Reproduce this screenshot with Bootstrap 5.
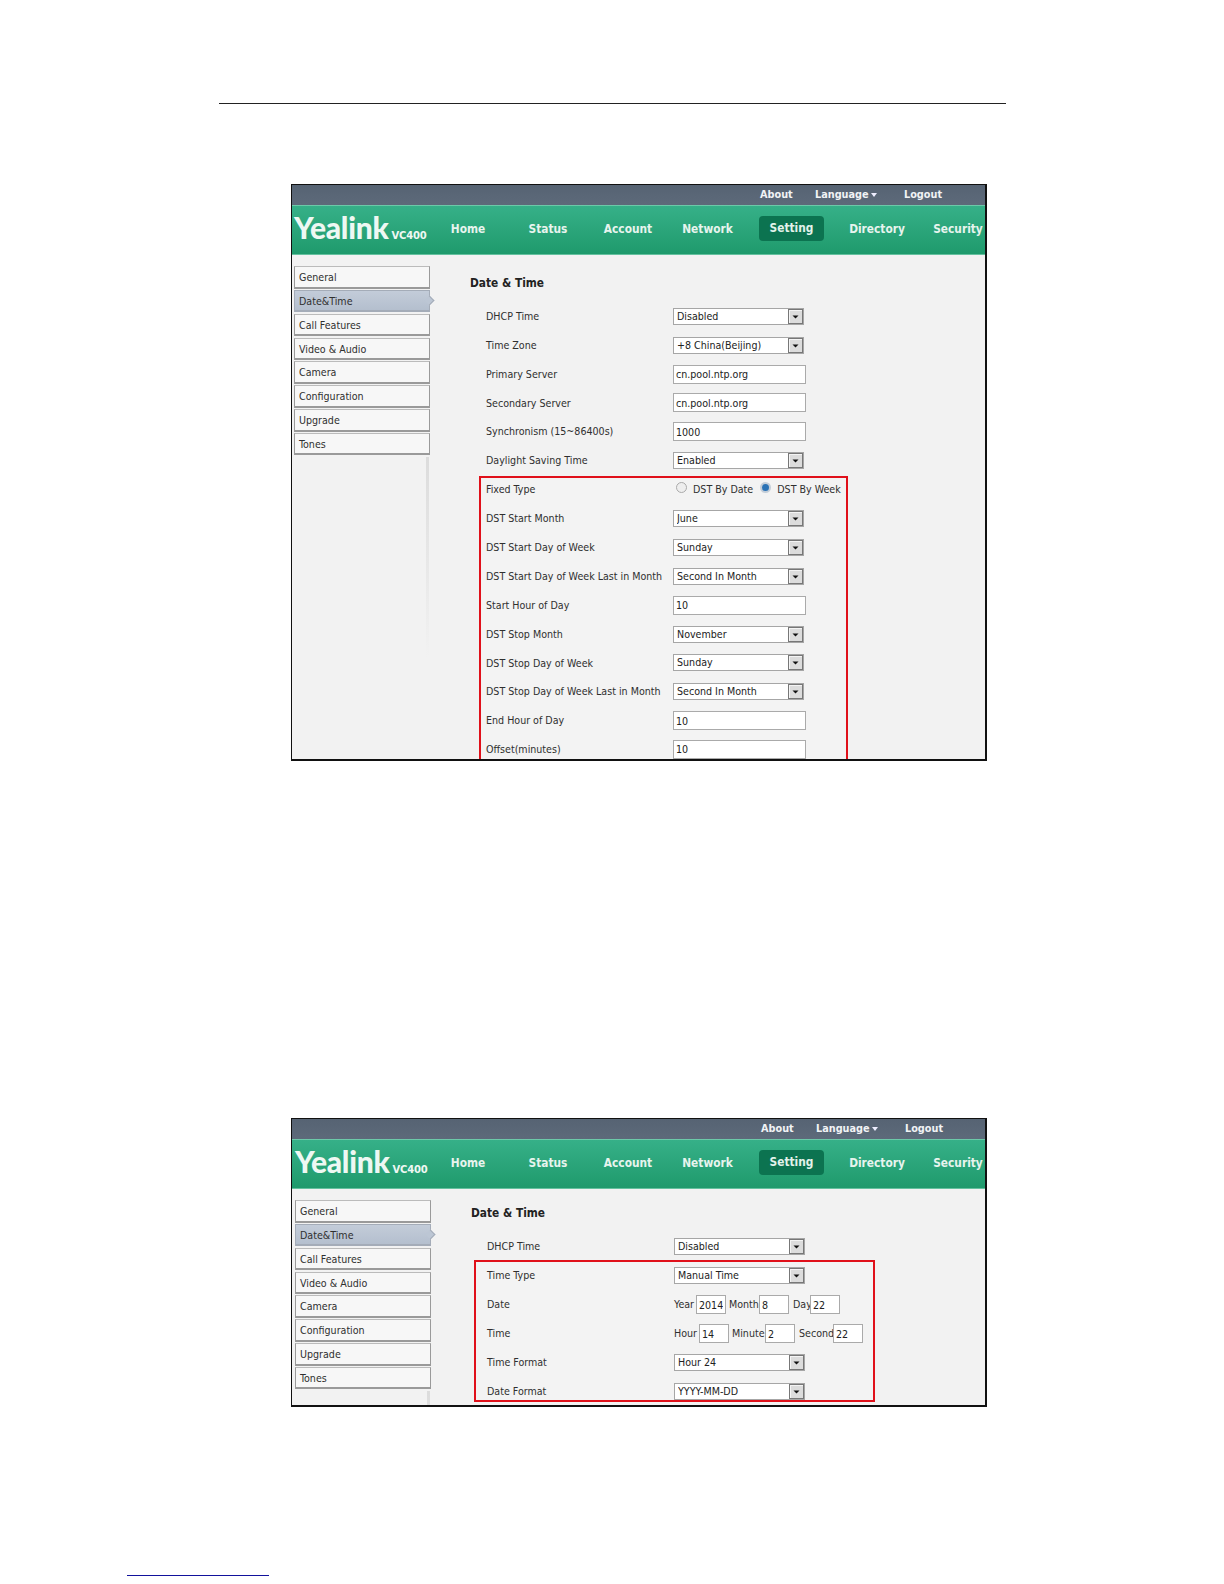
<!DOCTYPE html>
<html lang="en">
<head>
<meta charset="utf-8">
<title>Date &amp; Time</title>
<link rel="stylesheet" href="https://cdn.jsdelivr.net/npm/bootstrap@5.3.0/dist/css/bootstrap.min.css">
<style>
body{background:#fff;margin:0;font-family:"DejaVu Sans Condensed","DejaVu Sans",sans-serif;font-size:10.6px;color:#2f2f2f;line-height:1.2}
.sheet{width:1224px;height:1584px;overflow:hidden;padding-top:103px}
.toprule{height:1px;background:#222;margin:0 218px 0 219px}
.shot{width:696px;margin-left:291px;border:solid #111;border-width:1px 2px 2px 1px;background:#f2f2f2;overflow:hidden}
.shot-a{height:577px;margin-top:80px}
.shot-b{height:289px;margin-top:357px}
.tbar{height:20px;background:linear-gradient(#566373,#5d6a7a);color:#f1f3f5;font-weight:700;font-size:10.8px}
.tbar span{white-space:nowrap}
.t1{margin-left:468px;width:55px}
.t2{width:89px}
.shot-b .t1{margin-left:469px}
.caret{display:inline-block;border:solid transparent;border-width:4px 3px 0;border-top-color:#eef;margin-left:2px;vertical-align:1px}
.hbar{height:50px;background:linear-gradient(#36b088,#1f9a6c);border-top:1px solid #6cc9a9;border-bottom:1px solid #64c19f;color:#e7f4ee;font-weight:700;font-size:11.8px}
.logo{width:138px;padding-left:2px;margin-bottom:5px;color:#eef8f3;white-space:nowrap}
.logo b{font-family:Lato,sans-serif;font-weight:900;font-size:30px;letter-spacing:-.3px;line-height:1}
.logo i{font-style:normal;font-family:"DejaVu Sans",sans-serif;font-weight:700;font-size:10px;margin-left:3px;letter-spacing:-.2px}
.nitem{width:80px;height:25px;line-height:26px;margin-bottom:3px;text-align:center;white-space:nowrap;flex:none}
.nitem:nth-child(5){width:79px}
.nitem:nth-child(6){width:65px;margin-left:12px;margin-right:11px;line-height:25px;background:#0c7350;border-radius:4px;color:#e2f2ea}
.nitem:nth-child(7){width:84px}
.nitem:nth-child(8){width:54px;margin-left:12px}
.shot-b .logo{padding-left:3px;width:139px}
.sb{width:172px;flex:none;padding:11px 0 0 2px}
.shot-b .sb{padding-left:3px}
.sitem{width:136px;height:22.5px;line-height:21px;padding-left:4px;margin-bottom:1.35px;border:1px solid #9a9a9a;border-bottom-width:2px;border-top-color:#bbb;background:#f7f7f7;position:relative}
.sitem.on{background:linear-gradient(#c3ccd9,#b4bfce);border-color:#a4acb8}
.sitem.on::after{content:"";position:absolute;right:-4px;top:6px;width:7px;height:7px;background:#bcc6d4;border:solid #a4acb8;border-width:1px 1px 0 0;transform:rotate(45deg)}
.stail{width:3px;margin-left:132px;height:200px;background:linear-gradient(#dcdcdc,#f2f2f2)}
.main{flex:1;min-width:0}
.shot-a .ttl{margin:20px 0 0 6px}
.shot-b .ttl{margin:16px 0 0 7px}
.ttl{font-weight:700;font-size:11.8px;color:#222;height:16px;line-height:16px}
.shot-a .rows{margin-top:11px;padding-left:22px}
.shot-b .rows{margin-top:11px;padding-left:23px}
.fr{height:28.83px;white-space:nowrap}
.lb{width:187px;flex:none}
.redbox{border:2px solid #e0101a;background:#f3f3f3}
.rb-a{margin-left:-7px;width:369px;height:285px;margin-top:1px;padding-left:5px}
.rb-a .fr:first-child{margin-top:-2.4px;padding-bottom:2px}
.rb-b{margin-left:-13px;width:401px;height:142px;margin-top:-1px;padding-left:11px}
.rb-b .fr:first-child{margin-top:-.4px;padding-bottom:1px}
select.form-select.wsel{width:131px;height:17px;min-height:0;padding:0 20px 0 3px;font-size:10.6px;line-height:15px;color:#222;border:1px solid #a6a6a6;border-radius:0;box-shadow:none;background-color:#fff;background-position:right 0 center;background-size:15px 15px;background-repeat:no-repeat;background-image:url("data:image/svg+xml,%3Csvg xmlns='http://www.w3.org/2000/svg' width='15' height='15'%3E%3Crect width='15' height='15' fill='%23777'/%3E%3Crect x='1' y='1' width='13' height='13' fill='%23f4f4f4'/%3E%3Crect x='2' y='2' width='12' height='12' fill='%23dcdcdc'/%3E%3Cpath d='M4.5 6.5h6l-3 3z' fill='%23111'/%3E%3C/svg%3E");font-family:inherit}
input.form-control.wtx{width:133px;height:19px;min-height:0;padding:0 2px;font-size:10.6px;color:#222;border:1px solid #aaa;border-radius:0;background:#fff;box-shadow:none;font-family:inherit}
input.form-control.wsm{width:30px}
.wrad{width:11px;height:11px;margin:0;border:1px solid #aaa;background-color:#eee;flex:none}
.wrad:checked{background-color:#2a72b5;border-color:#c3cdd8;border-width:2px;background-image:none}
.wrad-a{margin:0 6px 2px 3px}
.wrad-b{margin:0 6px 2px 7px}
.dl{width:142px;height:1px;background:#12129c;margin:168px 0 0 127px}
.wy{width:22px}.wm{width:33px;padding-left:3px}.wd{width:21px;padding-left:4px}
.wh{width:25px}.wi{width:36px;padding-left:3px}.ws{width:38px;padding-left:4px}
</style>
</head>
<body>
<div class="sheet">
  <div class="toprule"></div>

  <div class="shot shot-a">
    <div class="tbar d-flex align-items-center"><span class="t1">About</span><span class="t2">Language<i class="caret"></i></span><span>Logout</span></div>
    <div class="hbar d-flex align-items-center">
      <div class="logo"><b>Yealink</b><i>VC400</i></div>
      <div class="nitem">Home</div><div class="nitem">Status</div><div class="nitem">Account</div><div class="nitem">Network</div><div class="nitem">Setting</div><div class="nitem">Directory</div><div class="nitem">Security</div>
    </div>
    <div class="d-flex">
      <div class="sb">
        <div class="sitem">General</div><div class="sitem on">Date&amp;Time</div><div class="sitem">Call Features</div><div class="sitem">Video &amp; Audio</div><div class="sitem">Camera</div><div class="sitem">Configuration</div><div class="sitem">Upgrade</div><div class="sitem">Tones</div>
        <div class="stail"></div>
      </div>
      <div class="main">
        <div class="ttl">Date &amp; Time</div>
        <div class="rows">
          <div class="fr d-flex align-items-center"><div class="lb">DHCP Time</div><select class="form-select wsel"><option>Disabled</option></select></div>
          <div class="fr d-flex align-items-center"><div class="lb">Time Zone</div><select class="form-select wsel"><option>+8 China(Beijing)</option></select></div>
          <div class="fr d-flex align-items-center"><div class="lb">Primary Server</div><input class="form-control wtx" value="cn.pool.ntp.org"></div>
          <div class="fr d-flex align-items-center"><div class="lb">Secondary Server</div><input class="form-control wtx" value="cn.pool.ntp.org"></div>
          <div class="fr d-flex align-items-center"><div class="lb">Synchronism (15~86400s)</div><input class="form-control wtx" value="1000"></div>
          <div class="fr d-flex align-items-center"><div class="lb">Daylight Saving Time</div><select class="form-select wsel"><option>Enabled</option></select></div>
          <div class="redbox rb-a">
            <div class="fr d-flex align-items-center"><div class="lb">Fixed Type</div><input class="form-check-input wrad wrad-a" type="radio" name="ft"><span>DST By Date</span><input class="form-check-input wrad wrad-b" type="radio" name="ft" checked><span>DST By Week</span></div>
            <div class="fr d-flex align-items-center"><div class="lb">DST Start Month</div><select class="form-select wsel"><option>June</option></select></div>
            <div class="fr d-flex align-items-center"><div class="lb">DST Start Day of Week</div><select class="form-select wsel"><option>Sunday</option></select></div>
            <div class="fr d-flex align-items-center"><div class="lb">DST Start Day of Week Last in Month</div><select class="form-select wsel"><option>Second In Month</option></select></div>
            <div class="fr d-flex align-items-center"><div class="lb">Start Hour of Day</div><input class="form-control wtx" value="10"></div>
            <div class="fr d-flex align-items-center"><div class="lb">DST Stop Month</div><select class="form-select wsel"><option>November</option></select></div>
            <div class="fr d-flex align-items-center"><div class="lb">DST Stop Day of Week</div><select class="form-select wsel"><option>Sunday</option></select></div>
            <div class="fr d-flex align-items-center"><div class="lb">DST Stop Day of Week Last in Month</div><select class="form-select wsel"><option>Second In Month</option></select></div>
            <div class="fr d-flex align-items-center"><div class="lb">End Hour of Day</div><input class="form-control wtx" value="10"></div>
            <div class="fr d-flex align-items-center"><div class="lb">Offset(minutes)</div><input class="form-control wtx" value="10"></div>
          </div>
        </div>
      </div>
    </div>
  </div>

  <div class="shot shot-b">
    <div class="tbar d-flex align-items-center"><span class="t1">About</span><span class="t2">Language<i class="caret"></i></span><span>Logout</span></div>
    <div class="hbar d-flex align-items-center">
      <div class="logo"><b>Yealink</b><i>VC400</i></div>
      <div class="nitem">Home</div><div class="nitem">Status</div><div class="nitem">Account</div><div class="nitem">Network</div><div class="nitem">Setting</div><div class="nitem">Directory</div><div class="nitem">Security</div>
    </div>
    <div class="d-flex">
      <div class="sb">
        <div class="sitem">General</div><div class="sitem on">Date&amp;Time</div><div class="sitem">Call Features</div><div class="sitem">Video &amp; Audio</div><div class="sitem">Camera</div><div class="sitem">Configuration</div><div class="sitem">Upgrade</div><div class="sitem">Tones</div>
        <div class="stail"></div>
      </div>
      <div class="main">
        <div class="ttl">Date &amp; Time</div>
        <div class="rows">
          <div class="fr d-flex align-items-center"><div class="lb">DHCP Time</div><select class="form-select wsel"><option>Disabled</option></select></div>
          <div class="redbox rb-b">
            <div class="fr d-flex align-items-center"><div class="lb">Time Type</div><select class="form-select wsel"><option>Manual Time</option></select></div>
            <div class="fr d-flex align-items-center"><div class="lb">Date</div><span class="wy">Year</span><input class="form-control wtx wsm" value="2014"><span class="wm">Month</span><input class="form-control wtx wsm" value="8"><span class="wd">Day</span><input class="form-control wtx wsm" value="22"></div>
            <div class="fr d-flex align-items-center"><div class="lb">Time</div><span class="wh">Hour</span><input class="form-control wtx wsm" value="14"><span class="wi">Minute</span><input class="form-control wtx wsm" value="2"><span class="ws">Second</span><input class="form-control wtx wsm" value="22"></div>
            <div class="fr d-flex align-items-center"><div class="lb">Time Format</div><select class="form-select wsel"><option>Hour 24</option></select></div>
            <div class="fr d-flex align-items-center"><div class="lb">Date Format</div><select class="form-select wsel"><option>YYYY-MM-DD</option></select></div>
          </div>
        </div>
      </div>
    </div>
  </div>

  <div class="dl"></div>
</div>
<script src="https://cdn.jsdelivr.net/npm/bootstrap@5.3.0/dist/js/bootstrap.bundle.min.js"></script>
</body>
</html>
